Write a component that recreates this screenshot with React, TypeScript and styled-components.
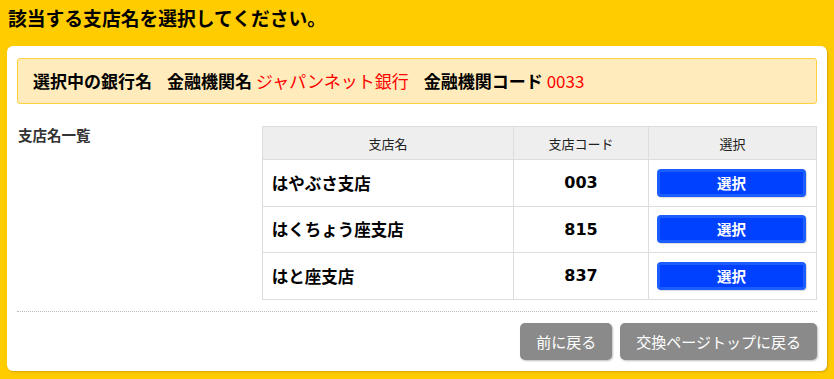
import React from 'react'
import styled, { createGlobalStyle } from 'styled-components'

const GlobalStyle = createGlobalStyle`
body {
  margin: 0;
  background-color: #FFCC00;
  font-family: "Noto Sans CJK JP", "Noto Sans", sans-serif;
  color: #000;
}
`

const branches = [
  { name: 'はやぶさ支店', code: '003' },
  { name: 'はくちょう座支店', code: '815' },
  { name: 'はと座支店', code: '837' },
]

const App = () => {
  return (
    <Page>
      <GlobalStyle />
      <Title>該当する支店名を選択してください。</Title>
      <Card>
        <InfoBox>
          <Label>選択中の銀行名</Label>
          <Label>金融機関名</Label>
          <Value>ジャパンネット銀行</Value>
          <Label>金融機関コード</Label>
          <Value>0033</Value>
        </InfoBox>

        <Section>
          <SectionTitle>支店名一覧</SectionTitle>
          <Table>
            <thead>
              <tr>
                <Th style={{ width: 253 }}>支店名</Th>
                <Th style={{ width: 135 }}>支店コード</Th>
                <Th>選択</Th>
              </tr>
            </thead>
            <tbody>
              {branches.map((b) => (
                <tr key={b.code}>
                  <NameCell>{b.name}</NameCell>
                  <CodeCell>{b.code}</CodeCell>
                  <SelectCell>
                    <SelectButton>選択</SelectButton>
                  </SelectCell>
                </tr>
              ))}
            </tbody>
          </Table>
        </Section>

        <Divider />

        <Footer>
          <BackButton>前に戻る</BackButton>
          <BackButton>交換ページトップに戻る</BackButton>
        </Footer>
      </Card>
    </Page>
  )
}

export default App

const Page = styled.div`
width: 834px;
height: 379px;
overflow: hidden;
`
const Title = styled.h1`
margin: 0;
height: 46px;
padding: 5px 8px 0;
box-sizing: border-box;
font-size: 18.8px;
line-height: 26px;
font-weight: bold;
`
const Card = styled.div`
margin: 0 7px;
width: 820px;
box-sizing: border-box;
background: #fff;
border-radius: 6px;
padding: 12px 10px 11px;
box-shadow: 1px 1px 2px rgba(160, 110, 0, 0.45);
`
const InfoBox = styled.div`
height: 46px;
box-sizing: border-box;
background: #FFEBBB;
border: 1px solid #FFD040;
border-radius: 3px;
display: flex;
align-items: center;
padding: 0 15px;
font-size: 17px;
line-height: 22px;
`
const Label = styled.span`
font-weight: bold;
margin-left: 15px;
&:first-child {
  margin-left: 0;
}
`
const Value = styled.span`
color: #ff0000;
margin-left: 4px;
`
const Section = styled.div`
display: flex;
margin-top: 22px;
`
const SectionTitle = styled.div`
width: 244px;
padding-left: 1px;
font-size: 14.5px;
font-weight: bold;
color: #333;
line-height: 18px;
`
const Table = styled.table`
width: 556px;
border-collapse: collapse;
border: 1px solid #ddd;
`
const Th = styled.th`
height: 32px;
background: #eee;
border: 1px solid #ddd;
font-size: 13px;
font-weight: normal;
color: #222;
text-align: center;
padding: 0;
`
const NameCell = styled.td`
height: 45.5px;
border: 1px solid #ddd;
padding: 0 0 0 9px;
font-size: 16.5px;
font-weight: bold;
`
const CodeCell = styled.td`
border: 1px solid #ddd;
text-align: center;
font-size: 16px;
font-weight: bold;
font-family: "DejaVu Sans", sans-serif;
`
const SelectCell = styled.td`
border: 1px solid #ddd;
padding: 0 10px 0 8px;
`
const SelectButton = styled.button`
display: block;
width: 149px;
height: 28px;
background: #0040ff;
border: 3px solid #1c5dff;
border-radius: 4px;
color: #fff;
font-family: "Noto Sans CJK JP", sans-serif;
font-size: 14.5px;
line-height: 20px;
font-weight: bold;
padding: 0;
cursor: pointer;
box-shadow: 1px 1px 1px rgba(0, 0, 0, 0.15);
`
const Divider = styled.hr`
margin: 11px 0 0;
border: none;
border-top: 1px dotted #bbb;
`
const Footer = styled.div`
display: flex;
justify-content: flex-end;
gap: 8px;
margin-top: 11px;
`
const BackButton = styled.button`
height: 37px;
padding: 0 16px;
background: #8a8a8a;
border: none;
border-radius: 5px;
color: #fff;
font-family: "Noto Sans CJK JP", sans-serif;
font-size: 15px;
cursor: pointer;
box-shadow: 1px 1px 2px rgba(0, 0, 0, 0.25);
`
